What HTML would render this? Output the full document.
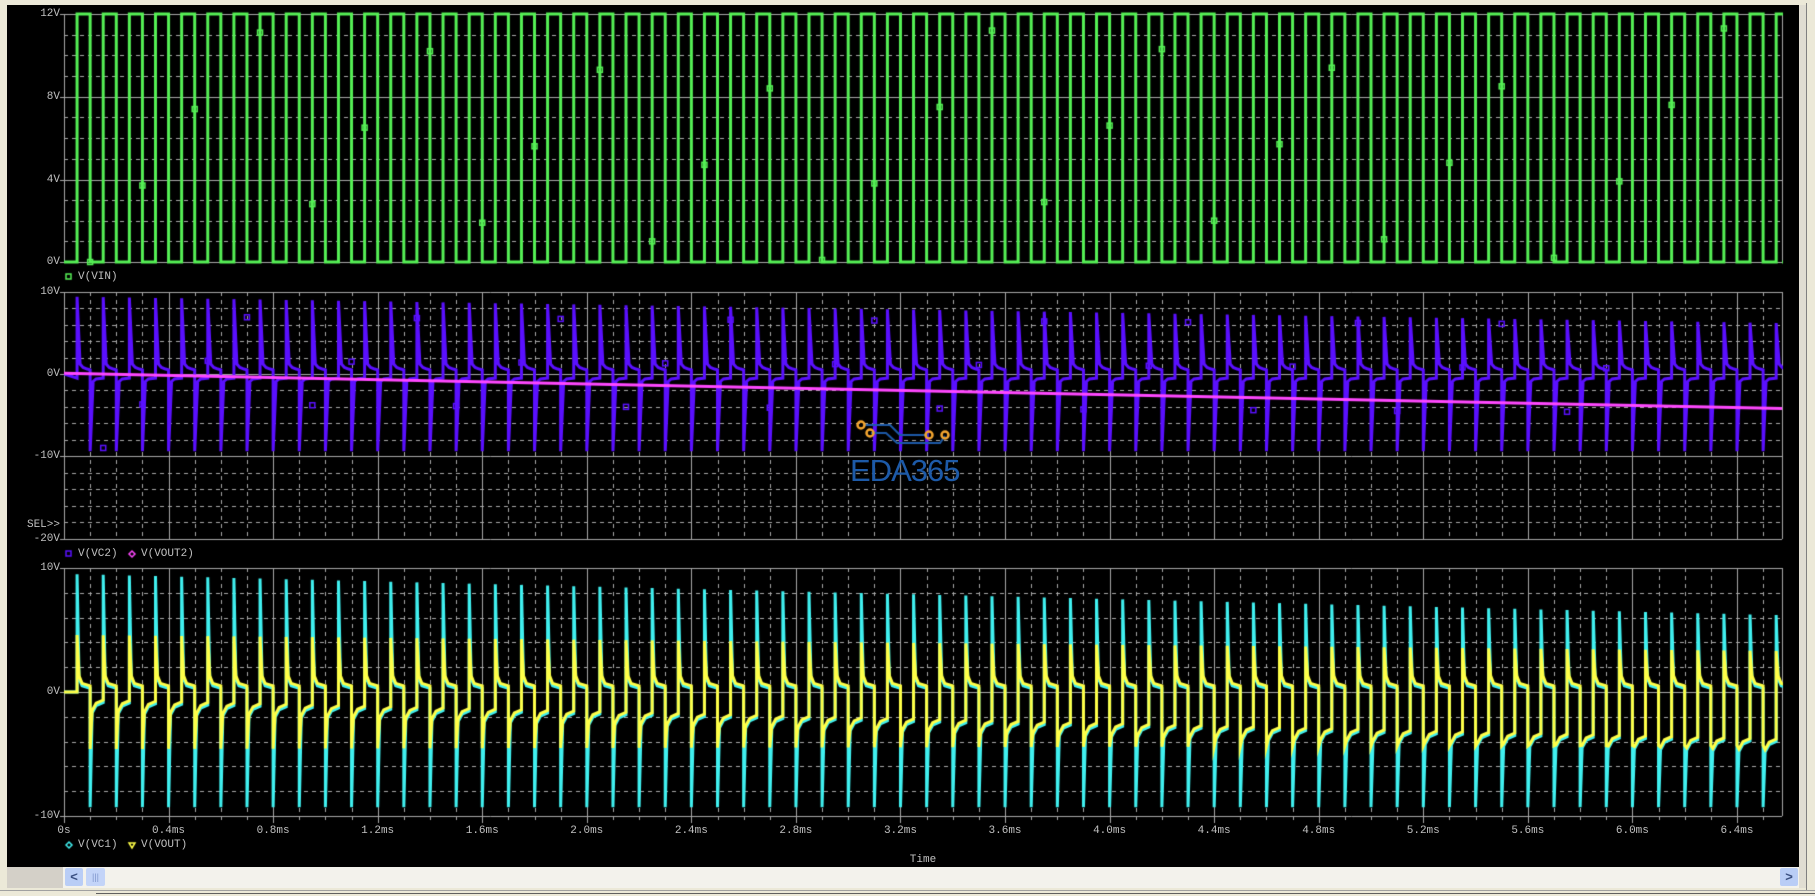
<!DOCTYPE html>
<html><head><meta charset="utf-8"><style>
html,body{margin:0;padding:0;width:1815px;height:896px;overflow:hidden;background:#ece9d8;}
#win{position:absolute;left:0;top:0;width:1815px;height:896px;}
canvas{position:absolute;left:0;top:0;}
.t{position:absolute;font-family:"Liberation Mono",monospace;font-size:11px;color:#c0c0c0;line-height:11px;white-space:pre;}
.r{text-align:right;width:60px;}
.c{text-align:center;width:80px;}
#wm{position:absolute;left:850px;top:453px;font-family:"Liberation Sans",sans-serif;font-size:31px;color:#1d5aa8;letter-spacing:-1px;}
</style></head><body>
<div id="win">
<div style="position:absolute;left:7px;top:5px;width:1800px;height:883px;background:#000"></div>
<div style="position:absolute;left:1799px;top:5px;width:7px;height:883px;background:#e0ddd2"></div>
<div style="position:absolute;left:1806px;top:3px;width:1px;height:887px;background:#808080"></div>
<div style="position:absolute;left:7px;top:867px;width:1792px;height:21px;background:#f3f2ec"></div>
<div style="position:absolute;left:7px;top:867px;width:56px;height:21px;background:#d4d0c8"></div>
<div style="position:absolute;left:65px;top:868px;width:18px;height:18px;background:#b9cdf6;border-radius:2px;color:#3a4f80;font:bold 13px 'Liberation Sans',sans-serif;text-align:center;line-height:18px">&lt;</div>
<div style="position:absolute;left:86px;top:868px;width:19px;height:18px;background:#c3d4f8;border-radius:2px;color:#7e95cc;font:9px 'Liberation Sans',sans-serif;text-align:center;line-height:18px">|||</div>
<div style="position:absolute;left:1780px;top:868px;width:18px;height:18px;background:#b9cdf6;border-radius:2px;color:#3a4f80;font:bold 13px 'Liberation Sans',sans-serif;text-align:center;line-height:18px">&gt;</div>
<div style="position:absolute;left:0;top:890px;width:1815px;height:1px;background:#a0a0a0"></div>
<div style="position:absolute;left:96px;top:893px;width:1719px;height:1px;background:#606060"></div>
<canvas id="cv" width="1815" height="896"></canvas>

<div class="t r" style="left:0;top:9px">12V</div>
<div class="t r" style="left:0;top:92px">8V</div>
<div class="t r" style="left:0;top:175px">4V</div>
<div class="t r" style="left:0;top:257px">0V</div>
<div class="t r" style="left:0;top:287px">10V</div>
<div class="t r" style="left:0;top:369px">0V</div>
<div class="t r" style="left:0;top:451px">-10V</div>
<div class="t r" style="left:0;top:520px">SEL&gt;&gt;</div>
<div class="t r" style="left:0;top:534px">-20V</div>
<div class="t r" style="left:0;top:563px">10V</div>
<div class="t r" style="left:0;top:687px">0V</div>
<div class="t r" style="left:0;top:811px">-10V</div>

<div class="t" style="left:78px;top:272px">V(VIN)</div>
<div class="t" style="left:78px;top:549px">V(VC2)</div>
<div class="t" style="left:141px;top:549px">V(VOUT2)</div>
<div class="t" style="left:78px;top:840px">V(VC1)</div>
<div class="t" style="left:141px;top:840px">V(VOUT)</div>
<div class="t c" style="left:883px;top:855px">Time</div>
<div id="xl"></div>
<div id="wm">EDA365</div>
</div>
<script>
const c=document.getElementById('cv').getContext('2d');
const X=t=>64+t*261.4;
const L=64,R=1782;
function grid(top,bot,solidYs,dashYs,vert){
 c.strokeStyle='#a8a8a8';c.lineWidth=1;
 c.setLineDash([4,4]);
 dashYs.forEach(y=>{c.beginPath();c.moveTo(L,y+.5);c.lineTo(R,y+.5);c.stroke();});
 if(vert){for(let k=1;k*0.1<6.57;k++){if(k%4==0)continue;const x=Math.round(X(k*0.1))+.5;c.beginPath();c.moveTo(x,top);c.lineTo(x,bot);c.stroke();}}
 c.setLineDash([]);
 solidYs.forEach(y=>{c.beginPath();c.moveTo(L-4,y+.5);c.lineTo(R,y+.5);c.stroke();});
 if(vert){for(let k=4;k*0.1<6.57;k+=4){const x=Math.round(X(k*0.1))+.5;c.beginPath();c.moveTo(x,top);c.lineTo(x,bot);c.stroke();}}
 c.beginPath();c.moveTo(L+.5,top);c.lineTo(L+.5,bot);c.moveTo(R+.5,top);c.lineTo(R+.5,bot);c.stroke();
}
{const y=v=>262-v*248/12;const d=[];for(let v=1;v<12;v++)if(v%4)d.push(Math.round(y(v)));
grid(14,262,[14,97,180,262],d,false);}
{const y=v=>374-v*8.22;const d=[];for(let v=-18;v<10;v+=2)if(v%10)d.push(Math.round(y(v)));
grid(292,539,[292,374,456,539],d,true);}
{const y=v=>692-v*12.4;const d=[];for(let v=-8;v<10;v+=2)if(v)d.push(Math.round(y(v)));
grid(568,816,[568,692,816],d,true);
c.strokeStyle='#a8a8a8';for(let k=0;k*0.1<6.57;k++){const x=Math.round(X(k*0.1))+.5;c.beginPath();c.moveTo(x,816);c.lineTo(x,k%4?820:823);c.stroke();}}
{let h='';for(let k=0;k<=16;k++){const t=k*0.4;const s=k==0?'0s':t.toFixed(1)+'ms';h+=`<div class="t c" style="left:${X(t)-40}px;top:826px">${s}</div>`;}document.getElementById('xl').innerHTML=h;}
c.save();c.beginPath();c.rect(L,5,R-L+1,870);c.clip();
// VIN
{const y=v=>262-v*248/12;c.strokeStyle='#55f055';c.lineWidth=3;c.beginPath();c.moveTo(L,y(0));
for(let k=0;k<66;k++){const a=X(0.05+0.1*k),b=X(0.1+0.1*k);c.lineTo(a,y(0));c.lineTo(a,y(12));c.lineTo(b,y(12));c.lineTo(b,y(0));}
c.lineTo(R,y(0));c.stroke();
c.lineWidth=1.5;for(let k=0;k<30;k++){const t=0.1+k*0.217;const ph=((t-0.05)%0.1+0.1)%0.1;const x=X(0.05+Math.floor((t-0.05)/0.1)*0.1+(ph<0.05?0:0.05));const v=(k*3.7)%12;c.strokeRect(x-2.5,y(v)-2.5,5,5);}}
// VC2
{const y=v=>374-v*8.22;c.strokeStyle='#5a10ff';c.lineWidth=3;c.beginPath();c.moveTo(L,y(0));
for(let k=0;k<66;k++){const f=k/65;const a=X(0.05+0.1*k),b=X(0.1+0.1*k);
c.lineTo(a,y(-0.5));c.lineTo(a,y(9.4-3.2*f));c.lineTo(a+3,y(1.2));c.lineTo(a+6,y(0.8));c.lineTo(b-3,y(0.6));c.lineTo(b,y(0.5));
c.lineTo(b,y(-9.4));c.lineTo(b+3,y(-0.9));c.lineTo(b+6,y(-0.6));}
c.stroke();
c.lineWidth=1.5;for(let k=0;k<30;k++){const x=X(0.1+k*0.2+((k%2)?0:0.05));const v=((k*5.3)%16)-9;c.strokeRect(x-2.5,y(v)-2.5,5,5);}
c.strokeStyle='#ff48ff';c.lineWidth=3;c.beginPath();c.moveTo(L,y(0.1));c.lineTo(R,y(-4.2));c.stroke();}
// VC1 / VOUT
{const y=v=>692-v*12.4;
function tr(col,pk,pn,hi,lo,w){c.strokeStyle=col;c.lineWidth=w;c.beginPath();c.moveTo(L,y(0));
for(let k=0;k<66;k++){const f=k/65;const a=X(0.05+0.1*k),b=X(0.1+0.1*k);const Lv=lo(f);
c.lineTo(a,y(k?Lv+0.3:0));c.lineTo(a,y(pk(f)));c.lineTo(a+2,y(hi+0.8));c.lineTo(a+5,y(hi+0.2));c.lineTo(b,y(hi));
c.lineTo(b,y(pn(f)));c.lineTo(b+2,y(Lv-0.6));c.lineTo(b+6,y(Lv));}
c.stroke();}
tr('#40f0f0',f=>9.5-3.3*f,f=>-9.3,0.3,f=>-1.1-3.2*f,3);
tr('#ffff48',f=>4.6-1.3*f,f=>-4.6+0.3*f,0.5,f=>-0.9-3.2*f,3);}
c.restore();
c.lineWidth=1.5;c.strokeStyle='#55f055';c.strokeRect(66,274,5,5);
c.strokeStyle='#5a10ff';c.strokeRect(66,551,5,5);
function dia(x,y,col){c.strokeStyle=col;c.beginPath();c.moveTo(x,y-3);c.lineTo(x+3,y);c.lineTo(x,y+3);c.lineTo(x-3,y);c.closePath();c.stroke();}
dia(132,554,'#ff48ff');dia(69,845,'#40f0f0');
c.strokeStyle='#ffff48';c.beginPath();c.moveTo(129,843);c.lineTo(135,843);c.lineTo(132,848);c.closePath();c.stroke();
c.strokeStyle='#1d5aa8';c.lineWidth=2;c.beginPath();
c.moveTo(865,425);c.lineTo(890,425);c.lineTo(900,435);c.lineTo(928,435);
c.moveTo(871,433);c.lineTo(886,433);c.lineTo(897,443);c.lineTo(940,443);c.lineTo(945,436);c.stroke();
c.strokeStyle='#f4a630';c.lineWidth=2.5;[[861,425],[870,433],[929,435],[945,435]].forEach(p=>{c.beginPath();c.arc(p[0],p[1],3.5,0,7);c.stroke();});
</script>
</body></html>
